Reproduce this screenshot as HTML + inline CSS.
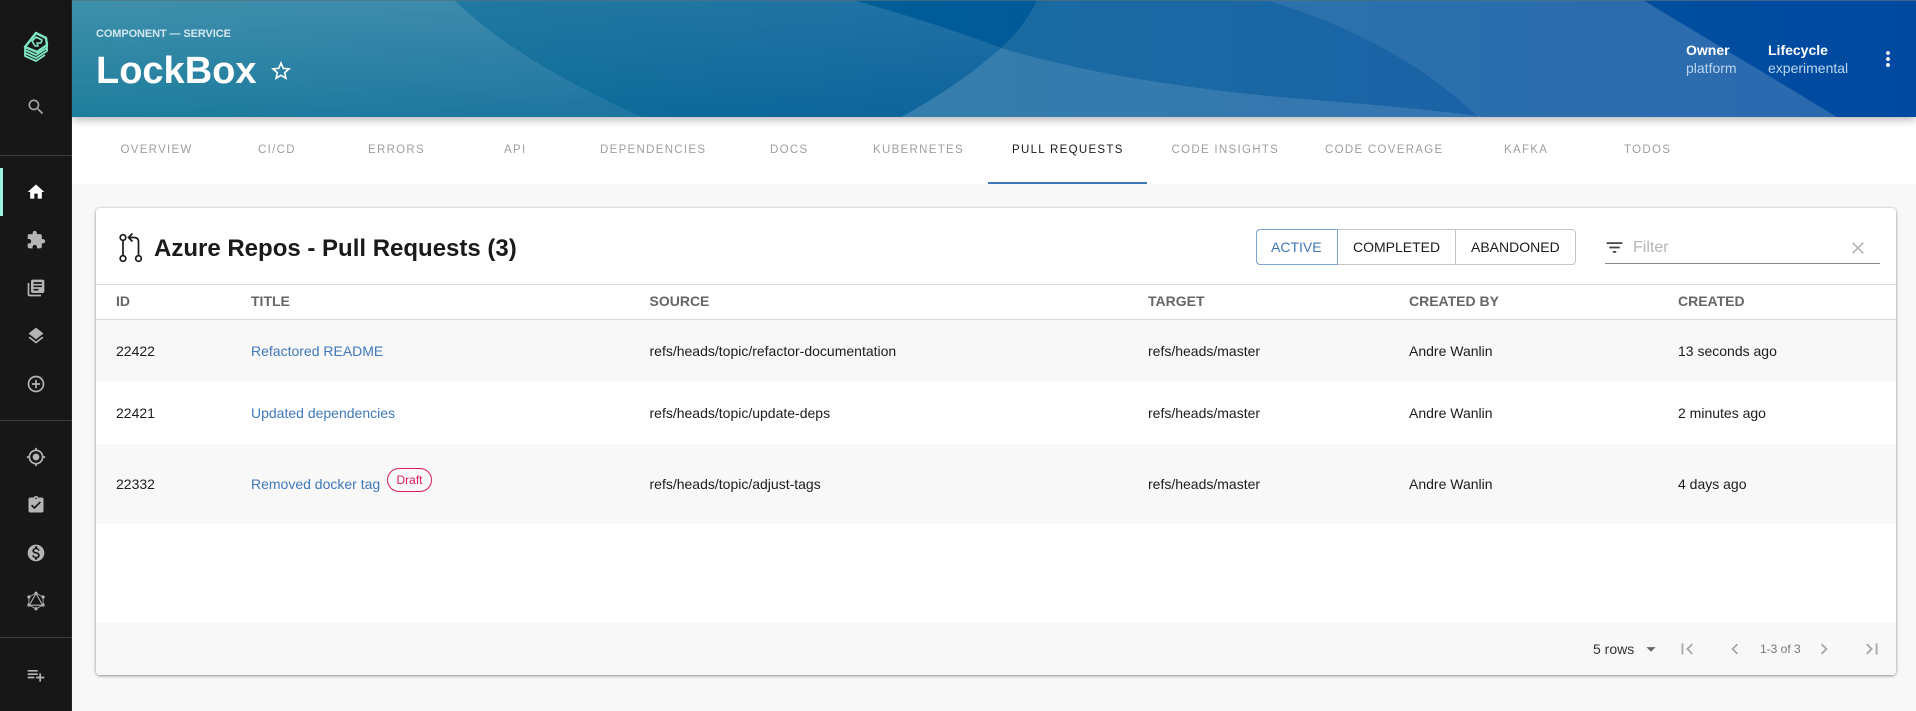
<!DOCTYPE html>
<html><head><meta charset="utf-8"><title>LockBox</title>
<style>
*{box-sizing:border-box}
html,body{margin:0;padding:0;width:1916px;height:711px;overflow:hidden;background:#f8f8f8;font-family:"Liberation Sans",sans-serif;color:#1a1a1a}
.a{position:absolute;white-space:nowrap}
svg{display:block}
.ic{position:absolute;left:26px;width:20px;height:20px;fill:#b5b5b5}
.tab{position:absolute;top:143px;font-size:11.5px;line-height:14px;letter-spacing:1.3px;color:#9e9e9e;white-space:nowrap}
.th{position:absolute;top:294px;font-size:14px;line-height:15px;font-weight:700;color:#666;white-space:nowrap}
.td{position:absolute;font-size:14px;line-height:16px;color:#1c1c1c;white-space:nowrap}
.lk{color:#3f78ba}
.pg{position:absolute;fill:#a8a8a8;width:22px;height:22px;top:638px}
</style></head><body>
<!-- sidebar -->
<div class="a" style="left:0;top:0;width:72px;height:711px;background:#171717;border-right:1px solid #262626"></div>
<svg class="a" style="left:22px;top:31px" width="28" height="32" viewBox="0 0 28 32" fill="none" stroke="#7fe5c5" stroke-width="1.8" stroke-linejoin="round">
<path d="M3 16 L14 2 L24 7 L25 14 L15 21 L3 16Z" stroke-width="2.4"/>
<path d="M10 10 L14 6 L20 9 L19 12 L15 12 L16 15 L13 15Z" fill="#171717" stroke-width="1.6"/>
<path d="M3 16v3l11 5 11-7v-3M3 19v3l11 5 11-7v-3M3 22v3l11 5 9-6"/>
</svg>
<svg class="ic" style="top:97px;fill:#a8a8a8" viewBox="0 0 24 24"><path d="M15.5 14h-.79l-.28-.27C15.41 12.59 16 11.11 16 9.5 16 5.91 13.09 3 9.5 3S3 5.91 3 9.5 5.91 16 9.5 16c1.61 0 3.09-.59 4.23-1.57l.27.28v.79l5 4.99L20.49 19l-4.99-5zm-6 0C7.01 14 5 11.99 5 9.5S7.01 5 9.5 5 14 7.01 14 9.5 11.99 14 9.5 14z"/></svg>
<div class="a" style="left:0;top:155px;width:72px;height:1px;background:#3d3d3d"></div>
<div class="a" style="left:0;top:168px;width:3px;height:48px;background:#9bf0e1"></div>
<svg class="ic" style="top:182px;fill:#fff" viewBox="0 0 24 24"><path d="M10 20v-6h4v6h5v-8h3L12 3 2 12h3v8z"/></svg>
<svg class="ic" style="top:230px" viewBox="0 0 24 24"><path d="M20.5 11H19V7c0-1.1-.9-2-2-2h-4V3.5C13 2.12 11.88 1 10.5 1S8 2.12 8 3.5V5H4c-1.1 0-1.99.9-1.99 2v3.8H3.5c1.49 0 2.7 1.21 2.7 2.7s-1.21 2.7-2.7 2.7H2V20c0 1.1.9 2 2 2h3.8v-1.5c0-1.49 1.21-2.7 2.7-2.7 1.49 0 2.7 1.21 2.7 2.7V22H17c1.1 0 2-.9 2-2v-4h1.5c1.38 0 2.5-1.12 2.5-2.5S21.88 11 20.5 11z"/></svg>
<svg class="ic" style="top:278px" viewBox="0 0 24 24"><path d="M4 6H2v14c0 1.1.9 2 2 2h14v-2H4V6zm16-4H8c-1.1 0-2 .9-2 2v12c0 1.1.9 2 2 2h12c1.1 0 2-.9 2-2V4c0-1.1-.9-2-2-2zm-1 9H9V9h10v2zm-4 4H9v-2h6v2zm4-8H9V5h10v2z"/></svg>
<svg class="ic" style="top:326px" viewBox="0 0 24 24"><path d="M11.99 18.54l-7.37-5.73L3 14.07l9 7 9-7-1.63-1.27-7.38 5.74zM12 16l7.36-5.73L21 9l-9-7-9 7 1.63 1.27L12 16z"/></svg>
<svg class="ic" style="top:374px" viewBox="0 0 24 24"><path d="M13 7h-2v4H7v2h4v4h2v-4h4v-2h-4V7zm-1-5C6.48 2 2 6.48 2 12s4.48 10 10 10 10-4.48 10-10S17.52 2 12 2zm0 18c-4.41 0-8-3.59-8-8s3.59-8 8-8 8 3.59 8 8-3.59 8-8 8z"/></svg>
<div class="a" style="left:0;top:420px;width:72px;height:1px;background:#3d3d3d"></div>
<svg class="ic" style="top:447px" viewBox="0 0 24 24"><path d="M12 8c-2.21 0-4 1.79-4 4s1.79 4 4 4 4-1.79 4-4-1.79-4-4-4zm8.94 3c-.46-4.17-3.77-7.48-7.94-7.94V1h-2v2.06C6.83 3.52 3.52 6.83 3.06 11H1v2h2.06c.46 4.17 3.77 7.48 7.94 7.94V23h2v-2.06c4.17-.46 7.48-3.77 7.94-7.94H23v-2h-2.06zM12 19c-3.87 0-7-3.13-7-7s3.13-7 7-7 7 3.13 7 7-3.13 7-7 7z"/></svg>
<svg class="ic" style="top:495px" viewBox="0 0 24 24"><path d="M19 3h-4.18C14.4 1.84 13.3 1 12 1c-1.3 0-2.4.84-2.82 2H5c-1.1 0-2 .9-2 2v14c0 1.1.9 2 2 2h14c1.1 0 2-.9 2-2V5c0-1.1-.9-2-2-2zm-7 0c.55 0 1 .45 1 1s-.45 1-1 1-1-.45-1-1 .45-1 1-1zm-2 14l-4-4 1.41-1.41L10 14.17l6.59-6.59L18 9l-8 8z"/></svg>
<svg class="ic" style="top:543px" viewBox="0 0 24 24"><path d="M12 2C6.48 2 2 6.48 2 12s4.48 10 10 10 10-4.48 10-10S17.52 2 12 2zm1.41 16.09V20h-2.67v-1.93c-1.71-.36-3.16-1.46-3.27-3.4h1.96c.1 1.05.82 1.87 2.65 1.87 1.96 0 2.4-.98 2.4-1.59 0-.83-.44-1.61-2.67-2.14-2.48-.6-4.18-1.62-4.18-3.67 0-1.72 1.39-2.84 3.11-3.21V4h2.67v1.95c1.86.45 2.79 1.86 2.85 3.39H14.3c-.05-1.11-.64-1.87-2.22-1.87-1.5 0-2.4.68-2.4 1.64 0 .84.65 1.39 2.67 1.91s4.18 1.39 4.18 3.91c-.01 1.83-1.38 2.83-3.12 3.16z"/></svg>
<svg class="ic" style="top:591px;fill:none;stroke:#b5b5b5;stroke-width:1" viewBox="0 0 24 24"><path d="M12 2.5L20.5 7.2V16.8L12 21.5L3.5 16.8V7.2Z"/><path d="M12 3L20 17H4Z" stroke-width="1.3"/><g fill="#b5b5b5" stroke="none"><circle cx="12" cy="2.7" r="1.9"/><circle cx="20.5" cy="7.2" r="1.9"/><circle cx="20.5" cy="16.8" r="1.9"/><circle cx="12" cy="21.3" r="1.9"/><circle cx="3.5" cy="16.8" r="1.9"/><circle cx="3.5" cy="7.2" r="1.9"/></g></svg>
<div class="a" style="left:0;top:637px;width:72px;height:1px;background:#3d3d3d"></div>
<svg class="ic" style="top:665px" viewBox="0 0 24 24"><path d="M14 10H2v2h12v-2zm0-4H2v2h12V6zm4 8v-4h-2v4h-4v2h4v4h2v-4h4v-2h-4zM2 16h8v-2H2v2z"/></svg>

<!-- tabs background -->
<div class="a" style="left:72px;top:117px;width:1844px;height:67px;background:#fff"></div>

<!-- header -->
<svg class="a" style="left:72px;top:0;box-shadow:0 3px 8px rgba(0,0,0,.28)" width="1844" height="117" viewBox="72 0 1844 117">
<defs>
<linearGradient id="g0" x1="0" x2="1" y1="0" y2="0"><stop offset="0" stop-color="#006d8f"/><stop offset="1" stop-color="#0049a1"/></linearGradient>
<linearGradient id="g1" x1="0" x2="0" y1="0" y2="1"><stop offset="0" stop-color="#fff" stop-opacity=".13"/><stop offset="1" stop-color="#fff" stop-opacity=".07"/></linearGradient>
<linearGradient id="g2" x1="0" x2="0" y1="0" y2="1"><stop offset="0" stop-color="#fff" stop-opacity=".13"/><stop offset="1" stop-color="#fff" stop-opacity=".05"/></linearGradient>
</defs>
<rect x="72" y="0" width="1844" height="117" fill="url(#g0)"/>
<path d="M72 0H854C905 15 955 30 1001 48C970 75 938 97 901 117H72Z" fill="url(#g2)"/>
<path d="M72 0H454C500 45 570 85 642 117H72Z" fill="url(#g1)"/>
<path d="M1037 0H1643L1837 117H901C938 97 970 75 1001 48C1020 30 1030 15 1037 0Z" fill="#fff" fill-opacity=".1"/>
<path d="M1001 48C1080 72 1170 85 1240 93S1400 105 1484 117H901C938 97 970 75 1001 48Z" fill="#fff" fill-opacity=".12"/>
<path d="M1266 0C1340 22 1420 60 1478 117H1837L1643 0Z" fill="#fff" fill-opacity=".08"/>
<rect x="72" y="0" width="1844" height="1" fill="#50707f" fill-opacity=".7"/>
</svg>
<div class="a" style="left:96px;top:28px;font-size:11px;line-height:13px;font-weight:700;color:#d2e6f0;letter-spacing:-.1px">COMPONENT — SERVICE</div>
<div class="a" style="left:96px;top:49px;font-size:38px;line-height:44px;font-weight:700;color:#fff">LockBox</div>
<svg class="a" style="left:269px;top:59px;fill:#fff" width="24" height="24" viewBox="0 0 24 24"><path d="M22 9.24l-7.19-.62L12 2 9.19 8.63 2 9.24l5.46 4.73L5.82 21 12 17.27 18.18 21l-1.63-7.03L22 9.24zM12 15.4l-3.76 2.27 1-4.28-3.32-2.88 4.38-.38L12 6.1l1.71 4.04 4.38.38-3.32 2.88 1 4.28L12 15.4z"/></svg>
<div class="a" style="left:1686px;top:43px;font-size:14px;line-height:15px;font-weight:700;color:#fff">Owner</div>
<div class="a" style="left:1686px;top:61px;font-size:14px;line-height:15px;color:#bcd6f0">platform</div>
<div class="a" style="left:1768px;top:43px;font-size:14px;line-height:15px;font-weight:700;color:#fff">Lifecycle</div>
<div class="a" style="left:1768px;top:61px;font-size:14px;line-height:15px;color:#bcd6f0">experimental</div>
<svg class="a" style="left:1876px;top:47px;fill:#fff" width="24" height="24" viewBox="0 0 24 24"><path d="M12 8c1.1 0 2-.9 2-2s-.9-2-2-2-2 .9-2 2 .9 2 2 2zm0 2c-1.1 0-2 .9-2 2s.9 2 2 2 2-.9 2-2-.9-2-2-2zm0 6c-1.1 0-2 .9-2 2s.9 2 2 2 2-.9 2-2-.9-2-2-2z"/></svg>

<!-- tabs -->
<div class="tab" style="left:120.5px">OVERVIEW</div>
<div class="tab" style="left:258px">CI/CD</div>
<div class="tab" style="left:368px">ERRORS</div>
<div class="tab" style="left:504px">API</div>
<div class="tab" style="left:600px">DEPENDENCIES</div>
<div class="tab" style="left:770px">DOCS</div>
<div class="tab" style="left:873px">KUBERNETES</div>
<div class="tab" style="left:1012px;color:#1a1a1a">PULL REQUESTS</div>
<div class="tab" style="left:1171.5px">CODE INSIGHTS</div>
<div class="tab" style="left:1325px">CODE COVERAGE</div>
<div class="tab" style="left:1504px">KAFKA</div>
<div class="tab" style="left:1624px">TODOS</div>
<div class="a" style="left:988px;top:182px;width:159px;height:2px;background:#3f78ba"></div>

<!-- card -->
<div class="a" style="left:96px;top:208px;width:1800px;height:467px;background:#fff;border-radius:4px;box-shadow:0 1px 3px rgba(0,0,0,.4),0 0 2px rgba(0,0,0,.08)"></div>
<svg class="a" style="left:117px;top:232px" width="28" height="32" viewBox="0 0 28 32" fill="none" stroke="#1a1a1a" stroke-width="1.7"><circle cx="6" cy="5.5" r="2.8"/><circle cx="6" cy="26.5" r="2.8"/><circle cx="21.5" cy="26.5" r="2.8"/><path d="M6 8.5V23.5M21.5 23.5V10C21.5 7 20 5.5 17 5.5H12M15.5 1.5L11.5 5.5L15.5 9.5"/></svg>
<div class="a" style="left:154px;top:235px;font-size:24px;line-height:28px;font-weight:700;color:#1a1a1a">Azure Repos - Pull Requests (3)</div>

<div class="a" style="left:1256px;top:229px;width:320px;height:36px;border:1px solid #c4c4c4;border-radius:4px"></div>
<div class="a" style="left:1256px;top:229px;width:82px;height:36px;border:1px solid #7ea6d2;border-radius:4px 0 0 4px"></div>
<div class="a" style="left:1455px;top:229px;width:1px;height:36px;background:#c4c4c4"></div>
<div class="td" style="left:1271px;top:239px;color:#3f78ba">ACTIVE</div>
<div class="td" style="left:1353px;top:239px">COMPLETED</div>
<div class="td" style="left:1471px;top:239px">ABANDONED</div>
<svg class="a" style="left:1604px;top:237px;fill:#444" width="21" height="21" viewBox="0 0 24 24"><path d="M10 18h4v-2h-4v2zM3 6v2h18V6H3zm3 7h12v-2H6v2z"/></svg>
<div class="a" style="left:1633px;top:239px;font-size:16px;line-height:18px;color:#b5b5b5">Filter</div>
<svg class="a" style="left:1848px;top:238px;fill:#b5b5b5" width="20" height="20" viewBox="0 0 24 24"><path d="M19 6.41L17.59 5 12 10.59 6.41 5 5 6.41 10.59 12 5 17.59 6.41 19 12 13.41 17.59 19 19 17.59 13.41 12z"/></svg>
<div class="a" style="left:1605px;top:263px;width:275px;height:1px;background:#8a8a8a"></div>

<div class="a" style="left:96px;top:284px;width:1800px;height:1px;background:#d9d9d9"></div>
<div class="a" style="left:96px;top:319px;width:1800px;height:1px;background:#d9d9d9"></div>
<div class="th" style="left:116px">ID</div>
<div class="th" style="left:251px">TITLE</div>
<div class="th" style="left:649.5px">SOURCE</div>
<div class="th" style="left:1148px">TARGET</div>
<div class="th" style="left:1409px">CREATED BY</div>
<div class="th" style="left:1678px">CREATED</div>

<div class="a" style="left:96px;top:320px;width:1800px;height:62px;background:#f8f8f8"></div>
<div class="a" style="left:96px;top:444px;width:1800px;height:80px;background:#f8f8f8"></div>
<div class="td" style="left:116px;top:343px">22422</div>
<div class="td lk" style="left:251px;top:343px">Refactored README</div>
<div class="td" style="left:649.5px;top:343px">refs/heads/topic/refactor-documentation</div>
<div class="td" style="left:1148px;top:343px">refs/heads/master</div>
<div class="td" style="left:1409px;top:343px">Andre Wanlin</div>
<div class="td" style="left:1678px;top:343px">13 seconds ago</div>

<div class="td" style="left:116px;top:405px">22421</div>
<div class="td lk" style="left:251px;top:405px">Updated dependencies</div>
<div class="td" style="left:649.5px;top:405px">refs/heads/topic/update-deps</div>
<div class="td" style="left:1148px;top:405px">refs/heads/master</div>
<div class="td" style="left:1409px;top:405px">Andre Wanlin</div>
<div class="td" style="left:1678px;top:405px">2 minutes ago</div>

<div class="td" style="left:116px;top:476px">22332</div>
<div class="td lk" style="left:251px;top:476px">Removed docker tag</div>
<div class="a" style="left:387px;top:468px;width:45px;height:24px;border:1px solid #dc1b5c;border-radius:12px;font-size:12px;line-height:22px;text-align:center;color:#dc1b5c">Draft</div>
<div class="td" style="left:649.5px;top:476px">refs/heads/topic/adjust-tags</div>
<div class="td" style="left:1148px;top:476px">refs/heads/master</div>
<div class="td" style="left:1409px;top:476px">Andre Wanlin</div>
<div class="td" style="left:1678px;top:476px">4 days ago</div>

<!-- footer -->
<div class="a" style="left:96px;top:623px;width:1800px;height:52px;background:#f8f8f8;border-radius:0 0 4px 4px"></div>
<div class="td" style="left:1593px;top:641px;color:#333">5 rows</div>
<svg class="pg" style="left:1640px;fill:#666" viewBox="0 0 24 24"><path d="M7 10l5 5 5-5z"/></svg>
<svg class="pg" style="left:1676px" viewBox="0 0 24 24"><path d="M18.41 16.59L13.82 12l4.59-4.59L17 6l-6 6 6 6zM6 6h2v12H6z"/></svg>
<svg class="pg" style="left:1724px" viewBox="0 0 24 24"><path d="M15.41 7.41L14 6l-6 6 6 6 1.41-1.41L10.83 12z"/></svg>
<div class="a" style="left:1760px;top:642px;font-size:12px;line-height:14px;color:#777">1-3 of 3</div>
<svg class="pg" style="left:1813px" viewBox="0 0 24 24"><path d="M10 6L8.59 7.41 13.17 12l-4.58 4.59L10 18l6-6z"/></svg>
<svg class="pg" style="left:1861px" viewBox="0 0 24 24"><path d="M5.59 7.41L10.18 12l-4.59 4.59L7 18l6-6-6-6zM16 6h2v12h-2z"/></svg>
</body></html>
